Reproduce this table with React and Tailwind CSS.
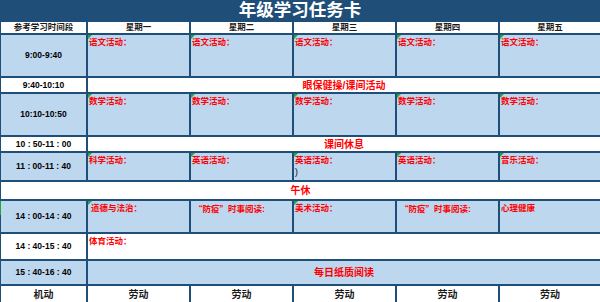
import React from "react";

const FONT = { fontFamily: '"Liberation Sans", "Noto Sans CJK SC", sans-serif' };
const CJK = { fontFamily: '"Noto Sans CJK SC", sans-serif' };

function Mark() {
  return (
    <span className="absolute left-0 top-0 w-0 h-0 border-t-[4px] border-r-[4px] border-t-[#22a83a] border-r-transparent" />
  );
}

function Act({ text, mark = false, extra, indent = false }) {
  return (
    <div className={`relative bg-[#bdd7ee] pt-px ${indent ? "pl-[3px]" : "pl-px"} text-[8.5px] leading-[12px] font-bold text-[#ff0000]`}>
      {mark && <Mark />}
      <div>{text}</div>
      {extra && <div className="text-black font-normal">{extra}</div>}
    </div>
  );
}

function Time({ t, blue = true, green = false }) {
  return (
    <div className={`relative flex items-center justify-center ${blue ? "bg-[#bdd7ee]" : "bg-white"} text-[8.5px] font-bold text-black whitespace-pre`}>
      {green && <span className="absolute -left-px top-0 h-[14px] w-px bg-[#22a83a]" />}
      {t}
    </div>
  );
}

function Merge({ text, blue = false }) {
  return (
    <div className={`col-span-5 flex items-center justify-center ${blue ? "bg-[#bdd7ee]" : "bg-white"} text-[10px] font-bold text-[#ff0000]`}>
      {text}
    </div>
  );
}

const Fangyi = (
  <span>
    <span style={CJK}>“防疫”</span>时事阅读:
  </span>
);

export default function App() {
  const days = ["星期一", "星期二", "星期三", "星期四", "星期五"];
  return (
    <div className="w-[600px] h-[302px] overflow-hidden bg-white" style={FONT}>
      <div className="h-[22px] bg-[#1f4e79] flex items-center justify-center text-white font-bold text-[17.5px] leading-none">
        年级学习任务卡
      </div>
      <div className="grid grid-cols-[85px_101px_101px_101px_101px_1fr] grid-rows-[11px_41px_14px_41px_14px_27px_17px_31px_25px_23px_17px] gap-[2px] bg-[#1f4e79] pl-px">
        <div className="bg-white flex items-center justify-center text-[8.5px] font-bold text-[#1a1a1a]">参考学习时间段</div>
        {days.map((d) => (
          <div key={d} className="bg-white flex items-center justify-center text-[8.5px] font-bold text-[#1a1a1a]">{d}</div>
        ))}

        <Time t="9:00-9:40" />
        {days.map((d) => (
          <Act key={d} text="语文活动：" mark />
        ))}

        <Time t="9:40-10:10" blue={false} />
        <Merge text="眼保健操/课间活动" />

        <Time t="10:10-10:50" />
        {days.map((d) => (
          <Act key={d} text="数学活动：" mark />
        ))}

        <Time t="10 : 50-11 : 00" blue={false} />
        <Merge text="课间休息" />

        <Time t="11 : 00-11 : 40" />
        <Act text="科学活动：" mark />
        <Act text="英语活动：" mark />
        <Act text="英语活动：" mark extra=")" />
        <Act text="英语活动：" mark />
        <Act text="音乐活动：" mark />

        <div className="col-span-6 flex items-center bg-white text-[10px] font-bold text-[#ff0000]">
          <span className="w-full text-center">午休</span>
        </div>

        <Time t="14 : 00-14 : 40" green />
        <Act text="道德与法治：" mark indent />
        <Act text={Fangyi} indent />
        <Act text="美术活动：" mark />
        <Act text={Fangyi} indent />
        <Act text="心理健康" />

        <Time t="14 : 40-15 : 40" blue={false} />
        <div className="col-span-5 bg-white pt-px pl-px text-[8.5px] leading-[12px] font-bold text-[#ff0000]">体育活动：</div>

        <Time t="15 : 40-16 : 40" />
        <Merge text="每日纸质阅读" blue />

        <div className="bg-white flex items-center justify-center text-[10px] font-bold text-[#1a1a1a]">机动</div>
        {days.map((d) => (
          <div key={d} className="bg-white flex items-center justify-center text-[10px] font-bold text-[#1a1a1a]">劳动</div>
        ))}
      </div>
    </div>
  );
}
